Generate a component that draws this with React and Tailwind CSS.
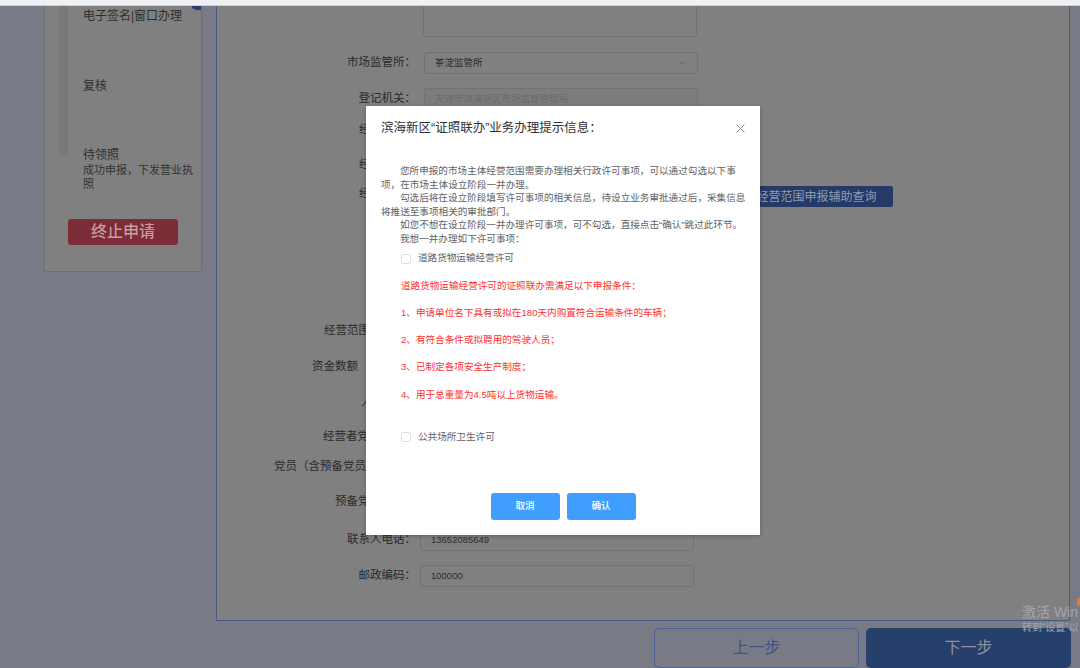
import React from "react";

const FONT = "font-['Liberation_Sans','Noto_Sans_CJK_SC',sans-serif]";

function Chevron() {
  return (
    <svg width="9" height="6" viewBox="0 0 9 6" fill="none">
      <polyline points="1,1 4.5,4.5 8,1" stroke="#626468" strokeWidth="1" />
    </svg>
  );
}

function CloseX() {
  return (
    <svg width="9" height="9" viewBox="0 0 9 9" fill="none">
      <line x1="0.5" y1="0.5" x2="8.5" y2="8.5" stroke="#909399" strokeWidth="1" />
      <line x1="8.5" y1="0.5" x2="0.5" y2="8.5" stroke="#909399" strokeWidth="1" />
    </svg>
  );
}

function Box() {
  return <span className="inline-block h-[10px] w-[10px] shrink-0 rounded-[2px] border border-[#dcdfe6] bg-white" />;
}

function Input({ children, cls }) {
  return (
    <div className={"flex h-[22px] w-[274px] shrink-0 items-center rounded-[3px] border border-[#727272] px-[10px] text-[9.5px] text-[#2c2c2c] " + cls}>
      {children}
    </div>
  );
}

function Row({ mt, label, children }) {
  return (
    <div className={"flex h-[22px] items-center " + mt}>
      <div className="w-[199px] shrink-0 text-right">{label}</div>
      {children}
    </div>
  );
}

/* row whose label continues under the dialog: only its visible start is written */
function CutRow({ mt, pl, label, children }) {
  return (
    <div className={"flex h-[22px] items-center " + mt}>
      <div className={"w-[199px] shrink-0 whitespace-nowrap " + pl}>{label}</div>
      {children}
    </div>
  );
}

export default function App() {
  return (
    <div className={"relative h-[668px] w-[1080px] overflow-hidden bg-[#787b85] " + FONT}>
      {/* top strip */}
      <div className="relative z-10 h-[6px] border-b border-[#cfd1d5] bg-[#eff1f4]" />

      {/* content */}
      <div className="-mt-[46px] flex gap-[14px] pl-[44px]">
        {/* sidebar */}
        <div className="relative w-[158px] shrink-0 self-start border border-[#707070] bg-[#808080] pb-[26px]">
          <div className="absolute right-0 top-[33px] h-[16px] w-[10px] rounded-bl-[6px] bg-[#2b4070]" />
          <div className="flex">
            <div className="ml-[14px] h-[195px] w-[9px] shrink-0 rounded-b-full bg-[#787878]" />
            <div className="ml-[15px] w-[118px] pt-[47px] text-[#2e2e2e]">
              <div className="h-[70px] text-[12px] leading-[16px]">电子签名|窗口办理</div>
              <div className="h-[69px] text-[12px] leading-[16px]">复核</div>
              <div>
                <div className="text-[12px] leading-[16px]">待领照</div>
                <div className="text-[11px] leading-[14px] text-[#333333]">成功申报，下发营业执照</div>
              </div>
            </div>
          </div>
          <div className="mx-auto mt-[28px] flex h-[26px] w-[110px] items-center justify-center rounded-[3px] bg-[#7b2c37] text-[16px] font-medium text-[#c99aa1]">
            终止申请
          </div>
        </div>

        {/* main panel */}
        <div className="w-[854px] shrink-0 border-x border-b border-[#4a5b82] bg-[#808080] pb-[33px] pt-[17px] text-[11.5px] text-[#2a2a2a]">
          <div className="ml-[206px] h-[60px] w-[274px] rounded-[3px] border border-[#727272]" />

          <Row mt="mt-[15px]" label="市场监管所：">
            <Input cls="ml-[8px] justify-between">
              <span>茶淀监管所</span>
              <Chevron />
            </Input>
          </Row>

          <Row mt="mt-[14px]" label="登记机关：">
            <Input cls="ml-[8px] bg-[#7b7c7d] text-[#686a6e]">天津市滨海新区市场监督管理局</Input>
          </Row>

          <CutRow mt="mt-[9px]" pl="pl-[142px]" label="经" />
          <CutRow mt="mt-[13px]" pl="pl-[142px]" label="经" />

          <div className="mt-[9px] flex h-[22px] items-start">
            <div className="h-[16px] w-[199px] shrink-0 whitespace-nowrap pl-[142px] leading-[16px]">经</div>
            <div className="ml-[324px] mt-[1px] flex h-[21px] w-[153px] items-center justify-center rounded-[2px] bg-[#253a66] text-[12px] text-[#8f9bb4]">
              经营范围申报辅助查询
            </div>
          </div>

          <CutRow mt="mt-[113px]" pl="pl-[107px]" label="经营范围" />
          <CutRow mt="mt-[14px]" pl="pl-[95px]" label="资金数额" />
          <CutRow mt="mt-[14px]" pl="pl-[144px]" label="人" />
          <CutRow mt="mt-[12px]" pl="pl-[106px]" label="经营者党" />
          <CutRow mt="mt-[8px]" pl="pl-[57px]" label="党员（含预备党员" />
          <CutRow mt="mt-[13px]" pl="pl-[118px]" label="预备党" />

          <Row mt="mt-[16px]" label="联系人电话：">
            <Input cls="ml-[4px]">13652085649</Input>
          </Row>
          <Row mt="mt-[14px]" label="邮政编码：">
            <Input cls="ml-[4px]">100000</Input>
          </Row>
        </div>
      </div>

      {/* bottom buttons */}
      <div className="mt-[7px] flex justify-end gap-[7px] pr-[9px]">
        <div className="flex h-[40px] w-[205px] items-center justify-center rounded-[5px] border border-[#4b6190] text-[16px] text-[#3d5283]">
          上一步
        </div>
        <div className="flex h-[40px] w-[205px] items-center justify-center rounded-[5px] bg-[#263f6b] text-[16px] text-[#8c919a]">
          下一步
        </div>
      </div>

      {/* dialog */}
      <div className="absolute left-[366px] top-[106px] flex h-[429px] w-[394px] flex-col bg-white shadow-[0_1px_4px_rgba(0,0,0,0.25)]">
        <div className="flex h-[44px] shrink-0 items-center justify-between pl-[15px] pr-[15px]">
          <span className="text-[12.5px] text-[#303133]">滨海新区“证照联办”业务办理提示信息：</span>
          <CloseX />
        </div>
        <div className="mt-[14px] whitespace-nowrap pl-[15px] text-[9.6px] leading-[13.6px] text-[#606266]">
          <div className="pl-[19px]">您所申报的市场主体经营范围需要办理相关行政许可事项，可以通过勾选以下事</div>
          <div>项，在市场主体设立阶段一并办理。</div>
          <div className="pl-[19px]">勾选后将在设立阶段填写许可事项的相关信息，待设立业务审批通过后，采集信息</div>
          <div>将推送至事项相关的审批部门。</div>
          <div className="pl-[19px]">如您不想在设立阶段一并办理许可事项，可不勾选，直接点击“确认”跳过此环节。</div>
          <div className="pl-[19px]">我想一并办理如下许可事项：</div>
        </div>
        <div className="mt-[6px] flex h-[14px] items-center gap-[7px] pl-[35px] text-[9.6px] text-[#606266]">
          <Box />
          <span>道路货物运输经营许可</span>
        </div>
        <div className="mt-[6px] whitespace-nowrap pl-[35px] text-[9.6px] leading-[27.3px] text-[#ff3030]">
          <div>道路货物运输经营许可的证照联办需满足以下申报条件：</div>
          <div>1、申请单位名下具有或拟在180天内购置符合运输条件的车辆；</div>
          <div>2、有符合条件或拟聘用的驾驶人员；</div>
          <div>3、已制定各项安全生产制度；</div>
          <div>4、用于总重量为4.5吨以上货物运输。</div>
        </div>
        <div className="mt-[22px] flex h-[14px] items-center gap-[7px] pl-[35px] text-[9.6px] text-[#606266]">
          <Box />
          <span>公共场所卫生许可</span>
        </div>
        <div className="mt-[49px] flex justify-center gap-[7px]">
          <div className="flex h-[27px] w-[69px] items-center justify-center rounded-[3px] bg-[#409eff] text-[9.6px] font-medium text-white">取消</div>
          <div className="flex h-[27px] w-[69px] items-center justify-center rounded-[3px] bg-[#409eff] text-[9.6px] font-medium text-white">确认</div>
        </div>
      </div>

      {/* windows activation watermark */}
      <div className="absolute left-[1022px] top-[603px] whitespace-nowrap text-[#a3a6ad]">
        <div className="text-[14px] leading-[18px]">激活 Win</div>
        <div className="text-[10px] leading-[14px]">转到“设置”以</div>
      </div>
      <div className="absolute left-[1077px] top-[598px] h-[8px] w-[3px] rounded-l-[2px] bg-[#e07b39]" />
    </div>
  );
}
